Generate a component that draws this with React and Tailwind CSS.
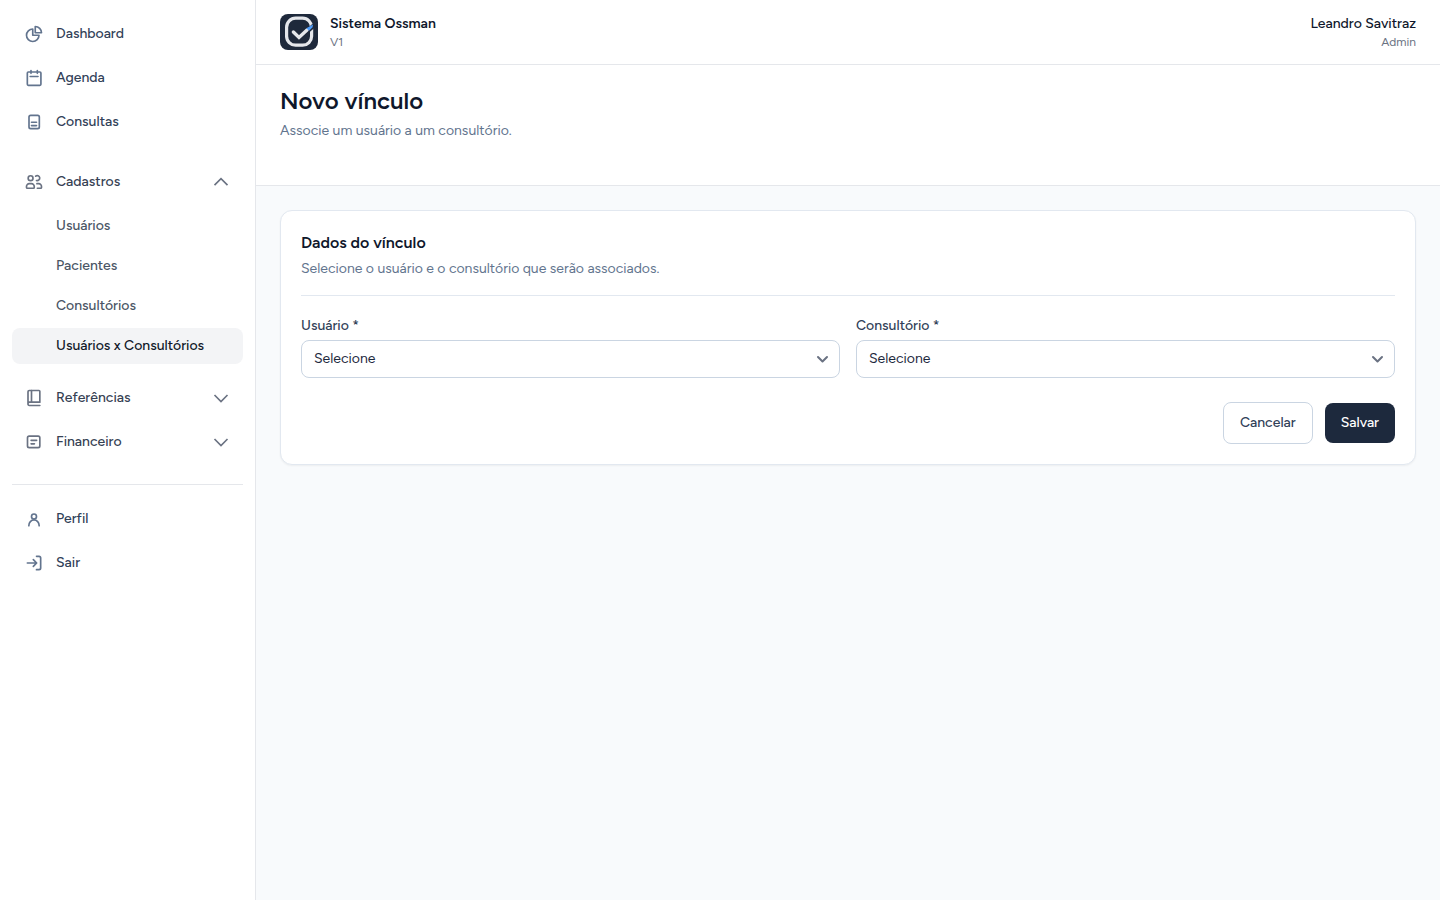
import React, { useState } from 'react';

const icons = {
  dashboard: (
    <>
      <path d="M10.5 6a7.5 7.5 0 1 0 7.5 7.5h-7.5V6z" />
      <path d="M13.5 10.5H21A7.5 7.5 0 0 0 13.5 3v7.5z" />
    </>
  ),
  agenda: (
    <>
      <rect x="4" y="4.8" width="16.3" height="16" rx="1.2" />
      <path d="M8.4 3v3.4M16 3v3.4M7.4 10.2h9.4" />
    </>
  ),
  consultas: (
    <>
      <rect x="6" y="4" width="12.4" height="16" rx="2" />
      <path d="M9 12.3h6M9 16.3h6" />
    </>
  ),
  cadastros: (
    <>
      <circle cx="7.9" cy="7.4" r="2.9" />
      <path d="M14 5a3 3 0 1 1 1 5.2" />
      <path d="M3 17.5A3.4 3.4 0 0 1 6.4 14h2.5a3.4 3.4 0 0 1 3.4 3.5v1a1 1 0 0 1-1 1H4a1 1 0 0 1-1-1z" />
      <path d="M15.5 14h2.1a3.4 3.4 0 0 1 3.4 3.5v1a1 1 0 0 1-1 1h-4" />
    </>
  ),
  referencias: (
    <>
      <path d="M19 21H6.5A1.8 1.8 0 0 1 4.8 19V4.5A1.5 1.5 0 0 1 6.3 3H18a1 1 0 0 1 1 1v13H6.5a1.8 1.8 0 0 0-1.7 2" />
      <path d="M9 3v14" />
    </>
  ),
  financeiro: (
    <>
      <rect x="4.2" y="5" width="14.8" height="13.8" rx="2" />
      <path d="M8.5 10h6.7M8.5 14.2h4" />
    </>
  ),
  perfil: (
    <>
      <circle cx="12" cy="9" r="3" />
      <path d="M5.8 20a6.2 6.9 0 0 1 12.4 0" />
    </>
  ),
  sair: (
    <>
      <path d="M15 4h3a2 2 0 0 1 2 2v12a2 2 0 0 1-2 2h-3" />
      <path d="M4 12h11M11.2 8l4 4-4 4" />
    </>
  ),
};

const Icon = ({ name, className = 'text-slate-500' }) => (
  <svg
    className={`h-5 w-5 shrink-0 ${className}`}
    viewBox="0 0 24 24"
    fill="none"
    stroke="currentColor"
    strokeWidth="2"
    strokeLinecap="round"
    strokeLinejoin="round"
    aria-hidden="true"
  >
    {icons[name]}
  </svg>
);

const Chevron = ({ open }) => (
  <svg
    className="h-5 w-5 shrink-0 text-gray-500"
    viewBox="0 0 24 24"
    fill="none"
    stroke="currentColor"
    strokeWidth="2"
    aria-hidden="true"
  >
    <path d={open ? 'm4.2 15.8 7.8-7.8 7.8 7.8' : 'm19.8 8.4-7.8 7.8-7.8-7.8'} />
  </svg>
);

const NavLink = ({ icon, children }) => (
  <a href="#" className="flex h-10 items-center gap-3 rounded-lg px-3 text-sm font-medium text-slate-700 hover:bg-gray-100">
    <Icon name={icon} />
    {children}
  </a>
);

const NavGroup = ({ icon, label, open, onToggle }) => (
  <button
    type="button"
    onClick={onToggle}
    aria-expanded={open}
    className="flex h-10 w-full items-center gap-3 rounded-lg px-3 text-left text-sm font-medium text-gray-700 hover:bg-gray-100"
  >
    <Icon name={icon} className="text-gray-500" />
    <span className="flex-1">{label}</span>
    <Chevron open={open} />
  </button>
);

const cadastros = ['Usuários', 'Pacientes', 'Consultórios', 'Usuários x Consultórios'];

const Sidebar = () => {
  const [open, setOpen] = useState('cadastros');
  const toggle = (name) => setOpen(open === name ? '' : name);

  return (
    <aside className="w-64 shrink-0 border-r border-gray-200 bg-white px-3 py-3.5">
      <nav className="flex flex-col gap-1">
        <NavLink icon="dashboard">Dashboard</NavLink>
        <NavLink icon="agenda">Agenda</NavLink>
        <NavLink icon="consultas">Consultas</NavLink>
      </nav>
      <nav className="mt-5 flex flex-col gap-1 border-b border-gray-200 pb-[22px]">
        <NavGroup icon="cadastros" label="Cadastros" open={open === 'cadastros'} onToggle={() => toggle('cadastros')} />
        {open === 'cadastros' && (
          <div className="mt-0.5 mb-2.5 flex flex-col gap-1">
            {cadastros.map((item) => (
              <a
                key={item}
                href="#"
                className={
                  item === 'Usuários x Consultórios'
                    ? 'flex h-9 items-center rounded-lg bg-gray-100 pl-11 text-sm font-medium text-gray-900'
                    : 'flex h-9 items-center rounded-lg pl-11 text-sm font-medium text-gray-600 hover:bg-gray-100'
                }
              >
                {item}
              </a>
            ))}
          </div>
        )}
        <NavGroup icon="referencias" label="Referências" open={open === 'referencias'} onToggle={() => toggle('referencias')} />
        <NavGroup icon="financeiro" label="Financeiro" open={open === 'financeiro'} onToggle={() => toggle('financeiro')} />
      </nav>
      <nav className="mt-3.5 flex flex-col gap-1">
        <NavLink icon="perfil">Perfil</NavLink>
        <NavLink icon="sair">Sair</NavLink>
      </nav>
    </aside>
  );
};

const Logo = () => (
  <svg className="h-9 w-[38px] rounded-lg" viewBox="0 0 38 36" fill="none" aria-hidden="true">
    <rect width="38" height="36" fill="#1e293b" />
    <rect x="6.6" y="4.2" width="25" height="27" rx="9" stroke="#e5e7eb" strokeWidth="3.2" />
    <path d="M28 16.6 34 11.4" stroke="#1e293b" strokeWidth="4.4" />
    <path d="m13.4 18 5.6 5.4 8-7.4" stroke="#e5e7eb" strokeWidth="3.4" strokeLinecap="round" />
    <path d="M26.4 14.2 33 10.4 32.6 13.2 29 16.8z" fill="#4f9cf9" />
  </svg>
);

const SelectField = ({ id, label }) => (
  <div>
    <label htmlFor={id} className="block text-sm font-medium text-slate-700">
      {label} *
    </label>
    <div className="relative mt-1">
      <select
        id={id}
        required
        className="block h-[38px] w-full appearance-none rounded-lg border border-slate-300 bg-white pr-10 pl-3 text-sm text-slate-800"
      >
        <option value="">Selecione</option>
      </select>
      <svg
        className="pointer-events-none absolute inset-y-0 right-2 my-auto h-5 w-5 text-gray-500"
        viewBox="0 0 20 20"
        fill="none"
        stroke="currentColor"
        strokeWidth="2"
        strokeLinecap="round"
        strokeLinejoin="round"
        aria-hidden="true"
      >
        <path d="m6 8 4.5 4.5L15 8" />
      </svg>
    </div>
  </div>
);

const App = () => {
  return (
    <div className="flex min-h-screen bg-slate-50 font-['Figtree','Lato',sans-serif] antialiased">
      <Sidebar />
      <div className="min-w-0 flex-1">
        <header className="flex items-center justify-between border-b border-gray-200 bg-white px-6 py-3.5">
          <div className="flex items-center gap-3">
            <Logo />
            <div>
              <p className="text-sm font-semibold text-slate-900">Sistema Ossman</p>
              <p className="text-xs text-gray-500">V1</p>
            </div>
          </div>
          <div className="text-right">
            <p className="text-sm font-medium text-slate-900">Leandro Savitraz</p>
            <p className="text-xs text-gray-500">Admin</p>
          </div>
        </header>

        <div className="border-b border-gray-200 bg-white px-6 pt-5 pb-11">
          <h1 className="text-2xl font-semibold text-slate-900">Novo vínculo</h1>
          <p className="mt-1 text-sm text-slate-500">Associe um usuário a um consultório.</p>
        </div>

        <main className="p-6">
          <form
            onSubmit={(e) => e.preventDefault()}
            className="rounded-xl border border-slate-200 bg-white p-5 shadow-xs"
          >
            <div className="border-b border-slate-200 pb-4">
              <h2 className="text-base font-semibold text-slate-900">Dados do vínculo</h2>
              <p className="mt-1 text-sm text-slate-500">Selecione o usuário e o consultório que serão associados.</p>
            </div>
            <div className="mt-5 grid grid-cols-2 gap-4">
              <SelectField id="usuario" label="Usuário" />
              <SelectField id="consultorio" label="Consultório" />
            </div>
            <div className="mt-6 flex items-center justify-end gap-3">
              <button
                type="button"
                className="rounded-lg border border-slate-300 bg-white px-4 py-2.5 text-sm font-medium text-slate-700"
              >
                Cancelar
              </button>
              <button type="submit" className="rounded-lg bg-slate-800 px-4 py-2.5 text-sm font-medium text-white">
                Salvar
              </button>
            </div>
          </form>
        </main>
      </div>
    </div>
  );
};

export default App;
